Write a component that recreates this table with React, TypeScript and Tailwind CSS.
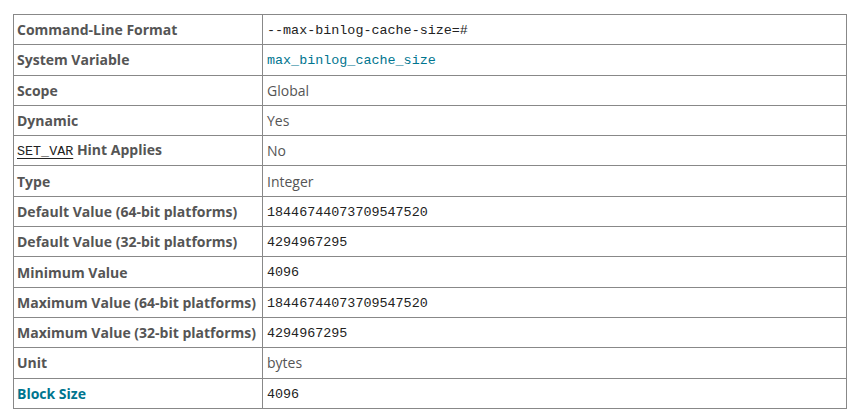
const mono = 'font-["Liberation_Mono","Courier_New",monospace] text-[13.4px] text-[#222]'

interface Row {
  label: React.ReactNode
  value: React.ReactNode
}

const rows: Row[] = [
  { label: 'Command-Line Format', value: <code className={mono}>--max-binlog-cache-size=#</code> },
  {
    label: 'System Variable',
    value: <code className='font-["Liberation_Mono","Courier_New",monospace] text-[13.4px] text-[#00758f]'>max_binlog_cache_size</code>,
  },
  { label: 'Scope', value: 'Global' },
  { label: 'Dynamic', value: 'Yes' },
  {
    label: (
      <>
        <code className='font-["Liberation_Mono","Courier_New",monospace] text-[13.4px] font-normal text-[#222] underline underline-offset-[3px]'>SET_VAR</code> Hint Applies
      </>
    ),
    value: 'No',
  },
  { label: 'Type', value: 'Integer' },
  { label: 'Default Value (64-bit platforms)', value: <code className={mono}>18446744073709547520</code> },
  { label: 'Default Value (32-bit platforms)', value: <code className={mono}>4294967295</code> },
  { label: 'Minimum Value', value: <code className={mono}>4096</code> },
  { label: 'Maximum Value (64-bit platforms)', value: <code className={mono}>18446744073709547520</code> },
  { label: 'Maximum Value (32-bit platforms)', value: <code className={mono}>4294967295</code> },
  { label: 'Unit', value: 'bytes' },
  { label: <span className="text-[#00758f]">Block Size</span>, value: <code className={mono}>4096</code> },
]

export default function App() {
  return (
    <div className="bg-white w-[861px] h-[420px] pt-[14px] pl-[13px] font-['Open_Sans',sans-serif] text-[14px] text-[#555]">
      <table className="w-[834px] border-collapse">
        <tbody>
          {rows.map((row, i) => (
            <tr key={i} className="h-[30.3px]">
              <th className="w-[249px] border border-[#888] px-[3px] text-left align-middle font-bold text-[#555]">
                {row.label}
              </th>
              <td className="border border-[#888] px-[4px] align-middle">{row.value}</td>
            </tr>
          ))}
        </tbody>
      </table>
    </div>
  )
}
